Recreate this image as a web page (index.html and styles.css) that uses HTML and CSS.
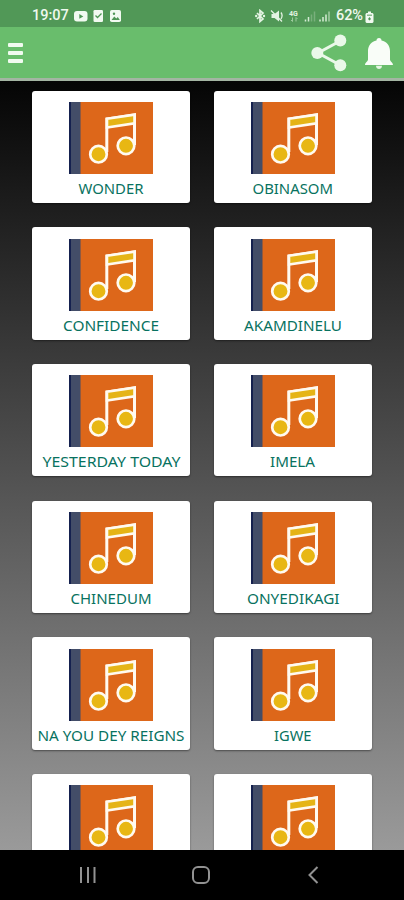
FILE: index.html
```
<!DOCTYPE html>
<html lang="en">
<head>
<meta charset="utf-8">
<meta name="viewport" content="width=device-width, initial-scale=1">
<title>Songs</title>
<link rel="stylesheet" href="styles.css">
</head>
<body>
<svg class="defs" aria-hidden="true">
  <symbol id="album" viewBox="0 0 84 72">
    <rect width="84" height="72" fill="#dd671a"/>
    <rect width="11.5" height="72" fill="#434d68"/>
    <rect width="2" height="72" fill="#15214f"/>
    <path d="M37.800 50V17L65.500 12.800V43" fill="none" stroke="#fffaf0" stroke-width="3"/>
    <path d="M38 16.700L65.500 12.700V21.300L38 25.500Z" fill="#e5b416" stroke="#fffaf0" stroke-width="2.600"/>
    <circle cx="29.500" cy="52.200" r="8.300" fill="#e8b713" stroke="#fffaf0" stroke-width="2.700"/>
    <circle cx="57" cy="43.800" r="8.300" fill="#e8b713" stroke="#fffaf0" stroke-width="2.700"/>
  </symbol>
</svg>
<div class="phone">
  <header class="status">
    <span class="time">19:07</span>
    <svg class="status-left" viewBox="0 0 50 14" width="50" height="14">
      <rect x="1" y="2" width="13.5" height="10.5" rx="3" fill="#f2faf1"/>
      <path d="M6.3 5v4.8l4-2.4z" fill="#4f9656"/>
      <rect x="20.5" y="1" width="9.5" height="12" rx="1.3" fill="#f2faf1"/>
      <path d="M22.5 6.5l2 2 4-4" fill="none" stroke="#4f9656" stroke-width="1.3"/>
      <rect x="37" y="1" width="11" height="12" rx="1.8" fill="#f2faf1"/>
      <path d="M38.5 11l2.8-3.5 2 2 1.5-1.5 2 3z" fill="#4f9656"/>
      <circle cx="41" cy="4.8" r="1.2" fill="#4f9656"/>
    </svg>
    <svg class="status-right" viewBox="0 0 78 14" width="78" height="14">
      <path d="M2 4l6 6-3 2.500v-11L8 4l-6 6" fill="none" stroke="#e4f3e3" stroke-width="1.700"/>
      <circle cx="1.200" cy="7" r="1.200" fill="#e4f3e3"/><circle cx="9" cy="7" r="1.200" fill="#e4f3e3"/>
      <path d="M16.500 5h3L24 1.500v11L19.500 9h-3z" fill="#e4f3e3"/>
      <path d="M16 1.500l11 11M26 3.500c1.500 2 1.500 4 0 6.500" fill="none" stroke="#e4f3e3" stroke-width="1.300"/>
      <text x="34" y="6.500" class="network">4G</text>
      <path d="M37.500 8.500v4M36 11l1.500 1.500M41 12.500v-4l1.500 1.500" fill="none" stroke="#9dca9d"/>
      <path d="M50.500 12.500v-2M53.500 12.500V8" stroke="#d6ebd5" stroke-width="1.500"/>
      <path d="M56.500 12.500V5.500M59.500 12.500v-10" stroke="#79af7c" stroke-width="1.500"/>
      <path d="M65 12.500v-2M68 12.500V8M71 12.500V5.500" stroke="#d6ebd5" stroke-width="1.500"/>
      <path d="M74 12.500v-10" stroke="#a5cfa5" stroke-width="1.500"/>
    </svg>
    <span class="percent">62%</span>
    <svg class="battery" viewBox="0 0 9 12" width="9" height="12">
      <path d="M3 .5h3V2h1.500l1 1v8l-1 1h-6l-1-1V3l1-1H3z" fill="#f2faf1"/>
      <path d="M2 3.500h5v1.500H2z" fill="#8dbb8f"/><path d="M4.500 6l1.500 2-1.500 1.500L3 8z" fill="#4f9656"/>
    </svg>
  </header>
  <nav class="toolbar">
    <button class="menu" aria-label="Menu"><i></i><i></i><i></i></button>
    <svg class="share" viewBox="0 0 36 38" width="36" height="38">
      <path d="M30 6.500L7 19l23 12.500" fill="none" stroke="#eaf8e9" stroke-width="3"/>
      <g fill="#eaf8e9"><circle cx="29.300" cy="6.500" r="6"/><circle cx="6.300" cy="19" r="6"/><circle cx="29.300" cy="31.300" r="6"/></g>
    </svg>
    <svg class="bell" viewBox="0 0 28 33" width="28" height="33">
      <path d="M11.500 3.500a2.500 2.500 0 0 1 5 0C21.500 4.500 25 8.500 25 14v8.500c0 2 3 3 3 5.500H0c0-2.500 3-3.500 3-5.500V14C3 8.500 6.500 4.500 11.500 3.500z" fill="#f9fdf8"/>
      <path d="M11 28.800h6c0 4.300-6 4.300-6 0z" fill="#e5f5e3"/>
    </svg>
  </nav>
  <main class="songs">
    <article class="card"><svg class="cover"><use href="#album"/></svg><svg class="label"><text x="46.500" y="16" textLength="65" lengthAdjust="spacingAndGlyphs">WONDER</text></svg></article>
    <article class="card"><svg class="cover"><use href="#album"/></svg><svg class="label"><text x="38.500" y="16" textLength="80.500" lengthAdjust="spacingAndGlyphs">OBINASOM</text></svg></article>
    <article class="card"><svg class="cover"><use href="#album"/></svg><svg class="label"><text x="31" y="16" textLength="96" lengthAdjust="spacingAndGlyphs">CONFIDENCE</text></svg></article>
    <article class="card"><svg class="cover"><use href="#album"/></svg><svg class="label"><text x="30" y="16" textLength="98" lengthAdjust="spacingAndGlyphs">AKAMDINELU</text></svg></article>
    <article class="card"><svg class="cover"><use href="#album"/></svg><svg class="label"><text x="10.500" y="16" textLength="138" lengthAdjust="spacingAndGlyphs">YESTERDAY TODAY</text></svg></article>
    <article class="card"><svg class="cover"><use href="#album"/></svg><svg class="label"><text x="56" y="16" textLength="45" lengthAdjust="spacingAndGlyphs">IMELA</text></svg></article>
    <article class="card"><svg class="cover"><use href="#album"/></svg><svg class="label"><text x="38.500" y="16" textLength="81" lengthAdjust="spacingAndGlyphs">CHINEDUM</text></svg></article>
    <article class="card"><svg class="cover"><use href="#album"/></svg><svg class="label"><text x="33" y="16" textLength="92.500" lengthAdjust="spacingAndGlyphs">ONYEDIKAGI</text></svg></article>
    <article class="card"><svg class="cover"><use href="#album"/></svg><svg class="label"><text x="5.500" y="16" textLength="147" lengthAdjust="spacingAndGlyphs">NA YOU DEY REIGNS</text></svg></article>
    <article class="card"><svg class="cover"><use href="#album"/></svg><svg class="label"><text x="60" y="16" textLength="37.500" lengthAdjust="spacingAndGlyphs">IGWE</text></svg></article>
    <article class="card"><svg class="cover"><use href="#album"/></svg></article>
    <article class="card"><svg class="cover"><use href="#album"/></svg></article>
  </main>
  <footer class="navbar">
    <svg viewBox="0 0 18 18" width="18" height="18"><path d="M2 1v16M9 1v16M15.500 1v16" stroke="#929292" stroke-width="2"/></svg>
    <svg viewBox="0 0 18 18" width="18" height="18"><rect x="1" y="1" width="16" height="16" rx="5" fill="none" stroke="#929292" stroke-width="2"/></svg>
    <svg viewBox="0 0 18 18" width="18" height="18"><path d="M13.500 1L5.500 9l8 8" fill="none" stroke="#929292" stroke-width="2"/></svg>
  </footer>
</div>
</body>
</html>
```
FILE: styles.css
```
* { box-sizing: border-box; }
body { margin: 0; background: #000; }
.defs { position: absolute; width: 0; height: 0; }
.phone {
  width: 404px;
  height: 900px;
  display: flex;
  flex-direction: column;
  overflow: hidden;
}
.status {
  height: 27px;
  flex: none;
  display: flex;
  align-items: center;
  padding: 4px 30px 0 32px;
  background: #519857;
  color: #eff9ee;
  font: 500 14.5px/20px Roboto, sans-serif;
}
.time { width: 41px; }
.status-left { flex: none; }
.status-right { flex: none; margin-left: auto; }
.network { font: 700 7px Roboto, sans-serif; fill: #e4f3e3; }
.percent { width: 28px; margin-left: 3px; letter-spacing: -0.1px; }
.battery { flex: none; margin: 2px 0 0 1px; }
.toolbar {
  height: 54px;
  flex: none;
  display: flex;
  align-items: center;
  padding: 1px 11px 0 8px;
  background: #69bd6c;
  border-bottom: 3px solid #a4b5a3;
}
.menu {
  display: flex;
  flex-direction: column;
  gap: 4.5px;
  padding: 0;
  border: 0;
  background: none;
  margin-right: auto;
}
.menu i { width: 15px; height: 3.5px; border-radius: 1px; background: #f1fbf0; }
.share { margin-right: 18px; }
.songs {
  flex: 1;
  min-height: 0;
  overflow: hidden;
  display: grid;
  grid-template-columns: 157.500px 157.500px;
  grid-auto-rows: 112.500px;
  gap: 24.200px 24.700px;
  align-content: start;
  padding: 9.500px 0 0 32.200px;
  background: linear-gradient(#050505, #9a9a9a);
}
.card {
  display: flex;
  flex-direction: column;
  align-items: center;
  padding-top: 11.500px;
  background: #fff;
  border-radius: 3px;
  box-shadow: 0 1px 2px rgba(0, 0, 0, 0.45);
}
.cover { width: 84px; height: 72px; flex: none; }
.label { width: 157.500px; height: 24px; margin-top: 4px; flex: none; overflow: visible; }
.label text {
  font: 400 14.300px "Noto Sans", sans-serif;
  fill: #087260;
}
.navbar {
  height: 50px;
  flex: none;
  display: flex;
  align-items: center;
  justify-content: space-between;
  padding: 0 82px 0 79px;
  background: #000;
}
```
